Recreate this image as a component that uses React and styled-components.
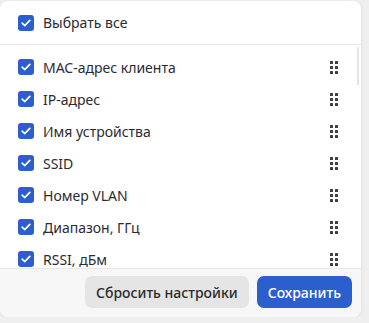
import React from "react";
import styled, { createGlobalStyle } from "styled-components";

const Global = createGlobalStyle`
  html, body { margin: 0; padding: 0; background: #efefef; }
  body { font-family: "Noto Sans", "Open Sans", sans-serif; }
  * { box-sizing: border-box; }
`;

const Card = styled.div`
  margin-top: 1px;
  width: 361px;
  height: 316px;
  background: #fff;
  border-radius: 8px;
  box-shadow: 0 1px 4px rgba(0,0,0,0.08);
  display: flex;
  flex-direction: column;
  overflow: hidden;
`;

const Header = styled.div`
  height: 44px;
  display: flex;
  align-items: center;
  padding: 0 18px;
  border-bottom: 1px solid #e6e6e6;
  flex: none;
`;

const ListWrap = styled.div`
  flex: 1;
  display: flex;
  min-height: 0;
`;

const List = styled.div`
  flex: 1;
  overflow: hidden;
  padding-top: 6px;
`;

const Scroll = styled.div`
  width: 4px;
  display: flex;
  flex-direction: column;
  padding-top: 2px;
`;

const Thumb = styled.div`
  width: 2px;
  height: 38px;
  background: #e2e2e2;
  border-radius: 1px;
`;

const Row = styled.div`
  height: 32px;
  display: flex;
  align-items: center;
  padding: 0 19px 0 18px;
`;

const Box = styled.span`
  width: 16px;
  height: 16px;
  border-radius: 3px;
  background: #2b5fd0;
  display: inline-flex;
  align-items: center;
  justify-content: center;
  flex: none;
`;

const Label = styled.span`
  margin-left: 9px;
  font-size: 14px;
  color: #2b2b33;
  flex: 1;
  white-space: nowrap;
`;

const Footer = styled.div`
  flex: none;
  height: 49px;
  border-top: 1px solid #e8e8e8;
  background: #f7f7f7;
  display: flex;
  justify-content: flex-end;
  align-items: center;
  gap: 8px;
  padding: 0 9px 2px 0;
`;

const Button = styled.button`
  height: 32px;
  border: none;
  border-radius: 7px;
  font-family: "Noto Sans", "Open Sans", sans-serif;
  font-size: 14px;
  font-weight: 500;
  white-space: nowrap;
  padding: 0 11px;
  background: ${p => (p.$primary ? "#2b5fcd" : "#e5e5e5")};
  color: ${p => (p.$primary ? "#ffffff" : "#2b2b2b")};
  cursor: pointer;
`;

const Check = () => (
  <svg width="10" height="8" viewBox="0 0 10 8" fill="none">
    <path d="M1.2 4.1 L3.8 6.6 L8.8 1.4" stroke="#fff" strokeWidth="1.7" strokeLinecap="round" strokeLinejoin="round" />
  </svg>
);

const Grip = () => (
  <svg width="8" height="13" viewBox="0 0 8 13">
    {[0, 5, 10].map(y =>
      [0, 5].map(x => <rect key={`${x}-${y}`} x={x} y={y} width="3" height="3" rx="0.6" fill="#3a3d44" />)
    )}
  </svg>
);

const items = [
  "MAC-адрес клиента",
  "IP-адрес",
  "Имя устройства",
  "SSID",
  "Номер VLAN",
  "Диапазон, ГГц",
  "RSSI, дБм",
];

export default function App() {
  return (
    <>
      <Global />
      <Card>
        <Header>
          <Box><Check /></Box>
          <Label>Выбрать все</Label>
        </Header>
        <ListWrap>
          <List>
            {items.map(t => (
              <Row key={t}>
                <Box><Check /></Box>
                <Label>{t}</Label>
                <Grip />
              </Row>
            ))}
          </List>
          <Scroll><Thumb /></Scroll>
        </ListWrap>
        <Footer>
          <Button>Сбросить настройки</Button>
          <Button $primary>Сохранить</Button>
        </Footer>
      </Card>
    </>
  );
}
